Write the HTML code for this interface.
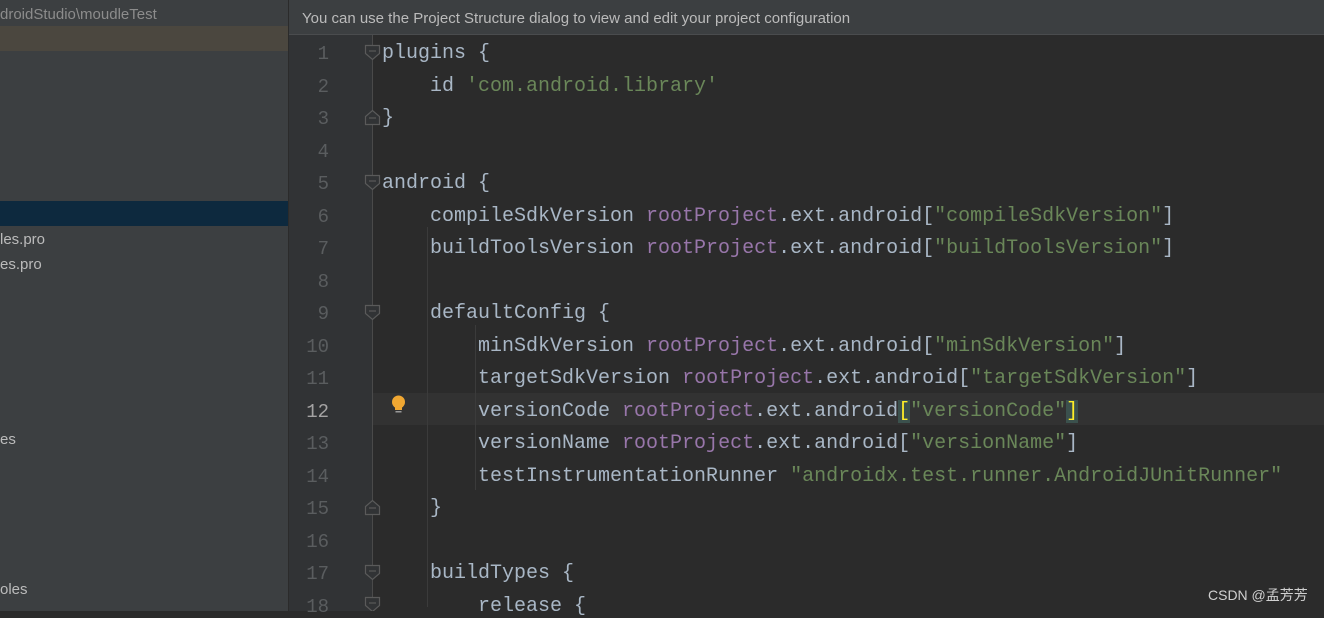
<!DOCTYPE html>
<html><head><meta charset="utf-8"><style>
html,body{margin:0;padding:0;}
body{width:1324px;height:611px;overflow:hidden;background:#2b2b2b;position:relative;font-family:"Liberation Sans","Noto Sans CJK SC",sans-serif;}
#left{position:absolute;left:0;top:0;width:288px;height:611px;background:#3c3f41;}
#left .t{position:absolute;left:0;font-size:15px;color:#bbbbbb;white-space:nowrap;}
#hdr{position:absolute;left:289px;top:0;width:1035px;height:34px;background:#3c3f41;border-bottom:1px solid #4a4c4e;}
#hdr span{position:absolute;left:13px;top:10px;font-size:15px;color:#bbbbbb;}
#gut{position:absolute;left:289px;top:35px;width:83px;height:576px;background:#313335;}
#foldline{position:absolute;left:372px;top:35px;width:1px;height:576px;background:#4a4a4a;}
.ln{position:absolute;left:289px;width:40px;text-align:right;font-family:"Liberation Mono",monospace;font-size:19px;color:#5a5d5f;margin-top:3px;}
.code{position:absolute;left:382px;font-family:"Liberation Mono",monospace;font-size:20px;color:#a9b7c6;white-space:pre;margin-top:3px;}
.s{color:#6a8759}.p{color:#9876aa}
.guide{position:absolute;width:1px;background:#3b3b3b;}
</style></head><body>
<div id="left">
 <div class="t" style="top:6px;color:#8c8c8c">droidStudio\moudleTest</div>
 <div style="position:absolute;left:0;top:26px;width:288px;height:25px;background:#4b473f"></div>
 <div style="position:absolute;left:0;top:201px;width:288px;height:25px;background:#0d293e"></div>
 <div class="t" style="top:231px">les.pro</div>
 <div class="t" style="top:256px">es.pro</div>
 <div class="t" style="top:431px">es</div>
 <div class="t" style="top:581px">oles</div>
</div>
<div id="hdr"><span>You can use the Project Structure dialog to view and edit your project configuration</span></div>
<div id="gut"></div>
<div style="position:absolute;left:373px;top:393px;width:951px;height:32px;background:#323232"></div>
<div id="foldline"></div>
<div class="guide" style="left:427px;top:227px;height:380px"></div>
<div class="guide" style="left:475px;top:325px;height:165px"></div>

<svg width="1324" height="611" style="position:absolute;left:0;top:0" fill="#2b2b2b" stroke="#5a5a5a" stroke-width="1.2">
 <path d="M365.5 45.5h14v8l-7 6l-7-6z" fill="#313335"/><path d="M369 51h7"/>
 <path d="M365.5 124.5h14v-8l-7-6l-7 6z" fill="#313335"/><path d="M369 118h7"/>
 <path d="M365.5 175.5h14v8l-7 6l-7-6z" fill="#313335"/><path d="M369 181h7"/>
 <path d="M365.5 305.5h14v8l-7 6l-7-6z" fill="#313335"/><path d="M369 311h7"/>
 <path d="M365.5 514.5h14v-8l-7-6l-7 6z" fill="#313335"/><path d="M369 508h7"/>
 <path d="M365.5 565.5h14v8l-7 6l-7-6z" fill="#313335"/><path d="M369 571h7"/>
 <path d="M365.5 597.5h14v8l-7 6l-7-6z" fill="#313335"/><path d="M369 603h7"/>
 <circle cx="398.5" cy="402" r="6.5" fill="#f0a732" stroke="none"/>
 <rect x="395" y="407" width="7" height="3" fill="#f0a732" stroke="none"/>
 <rect x="395.5" y="411" width="6" height="1.5" fill="#999" stroke="none"/>
</svg>

<div class="ln" style="top:40px">1</div>
<div class="ln" style="top:73px">2</div>
<div class="ln" style="top:105px">3</div>
<div class="ln" style="top:138px">4</div>
<div class="ln" style="top:170px">5</div>
<div class="ln" style="top:203px">6</div>
<div class="ln" style="top:235px">7</div>
<div class="ln" style="top:268px">8</div>
<div class="ln" style="top:300px">9</div>
<div class="ln" style="top:333px">10</div>
<div class="ln" style="top:365px">11</div>
<div class="ln" style="top:398px;color:#a4a3a3">12</div>
<div class="ln" style="top:430px">13</div>
<div class="ln" style="top:463px">14</div>
<div class="ln" style="top:495px">15</div>
<div class="ln" style="top:528px">16</div>
<div class="ln" style="top:560px">17</div>
<div class="ln" style="top:593px">18</div>

<div class="code" style="top:39px">plugins {</div>
<div class="code" style="top:72px">    id <span class="s">'com.android.library'</span></div>
<div class="code" style="top:104px">}</div>
<div class="code" style="top:169px">android {</div>
<div class="code" style="top:202px">    compileSdkVersion <span class="p">rootProject</span>.ext.android[<span class="s">"compileSdkVersion"</span>]</div>
<div class="code" style="top:234px">    buildToolsVersion <span class="p">rootProject</span>.ext.android[<span class="s">"buildToolsVersion"</span>]</div>
<div class="code" style="top:299px">    defaultConfig {</div>
<div class="code" style="top:332px">        minSdkVersion <span class="p">rootProject</span>.ext.android[<span class="s">"minSdkVersion"</span>]</div>
<div class="code" style="top:364px">        targetSdkVersion <span class="p">rootProject</span>.ext.android[<span class="s">"targetSdkVersion"</span>]</div>
<div class="code" style="top:397px">        versionCode <span class="p">rootProject</span>.ext.android<span style="background:#3b514d;color:#ffef28">[</span><span class="s">"versionCode"</span><span style="background:#3b514d;color:#ffef28">]</span></div>
<div class="code" style="top:429px">        versionName <span class="p">rootProject</span>.ext.android[<span class="s">"versionName"</span>]</div>
<div class="code" style="top:462px">        testInstrumentationRunner <span class="s">"androidx.test.runner.AndroidJUnitRunner"</span></div>
<div class="code" style="top:494px">    }</div>
<div class="code" style="top:559px">    buildTypes {</div>
<div class="code" style="top:592px">        release {</div>

<div style="position:absolute;left:1208px;top:585px;font-size:14px;color:#d0d0d0;font-family:'Liberation Sans','Noto Sans CJK SC',sans-serif">CSDN @孟芳芳</div>
</body></html>
